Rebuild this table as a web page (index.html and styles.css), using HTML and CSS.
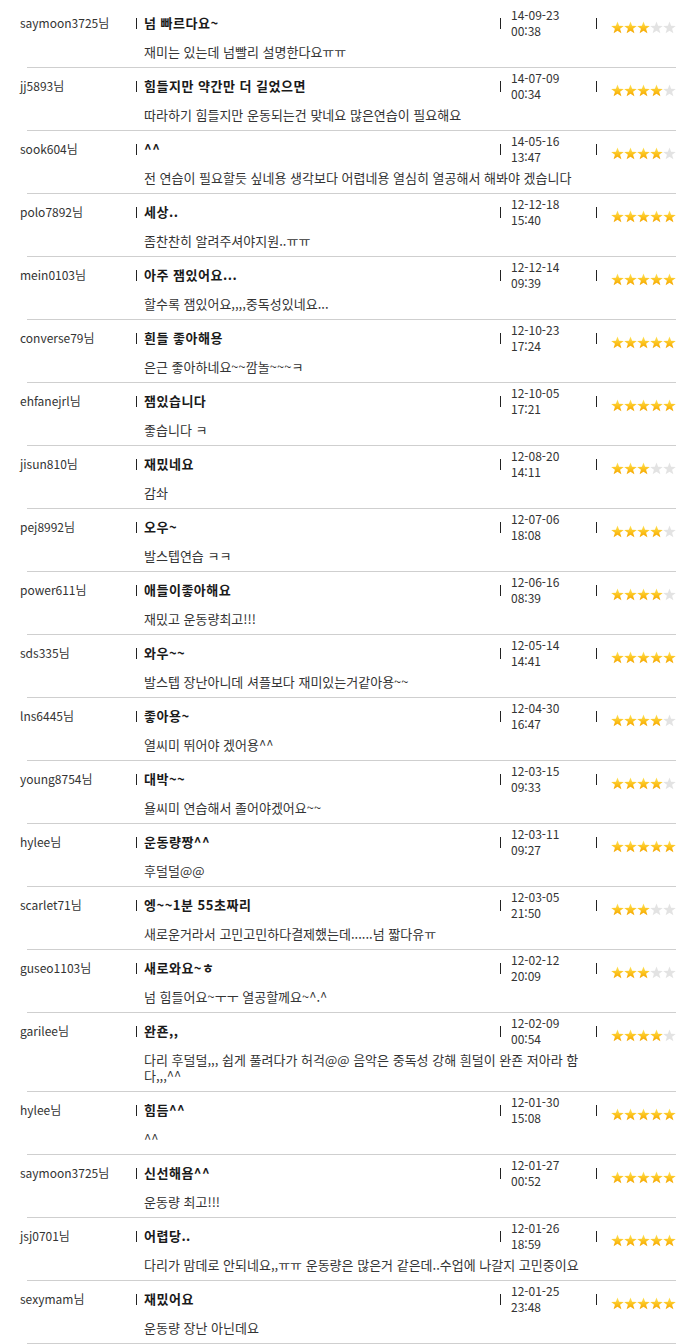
FILE: index.html
```html
<!DOCTYPE html>
<html lang="ko">
<head>
<meta charset="utf-8">
<title>상품평</title>
<link rel="stylesheet" href="styles.css">
</head>
<body>
<svg class="defs" width="0" height="0" aria-hidden="true">
  <defs>
    <linearGradient id="gold" x1="0" y1="0" x2="0" y2="1">
      <stop offset="0" stop-color="#ffe45a"/>
      <stop offset="0.55" stop-color="#fcc21c"/>
      <stop offset="1" stop-color="#f3a300"/>
    </linearGradient>
    <symbol id="star" viewBox="0 0 13 13">
      <polygon points="6.5,0.4 8.09,4.82 12.78,4.96 9.07,7.83 10.38,12.34 6.5,9.7 2.62,12.34 3.93,7.83 0.22,4.96 4.91,4.82"/>
    </symbol>
  </defs>
</svg>
<div class="reviews" id="reviews"></div>
<script src="app.js"></script>
</body>
</html>
```

FILE: app.js
```js
const data = [
  ["saymoon3725님","넘 빠르다요~","14-09-23","00:38",3,"재미는 있는데 넘빨리 설명한다요ㅠㅠ"],
  ["jj5893님","힘들지만 약간만 더 길었으면","14-07-09","00:34",4,"따라하기 힘들지만 운동되는건 맞네요 많은연습이 필요해요"],
  ["sook604님","^^","14-05-16","13:47",4,"전 연습이 필요할듯 싶네용 생각보다 어렵네용 열심히 열공해서 해봐야 겠습니다"],
  ["polo7892님","세상..","12-12-18","15:40",5,"좀찬찬히 알려주셔야지원..ㅠㅠ"],
  ["mein0103님","아주 잼있어요...","12-12-14","09:39",5,"할수록 잼있어요,,,,중독성있네요..."],
  ["converse79님","흰들 좋아해용","12-10-23","17:24",5,"은근 좋아하네요~~깜놀~~~ㅋ"],
  ["ehfanejrl님","잼있습니다","12-10-05","17:21",5,"좋습니다 ㅋ"],
  ["jisun810님","재밌네요","12-08-20","14:11",3,"감솨"],
  ["pej8992님","오우~","12-07-06","18:08",4,"발스텝연습 ㅋㅋ"],
  ["power611님","애들이좋아해요","12-06-16","08:39",4,"재밌고 운동량최고!!!"],
  ["sds335님","와우~~","12-05-14","14:41",5,"발스텝 장난아니데 셔플보다 재미있는거같아용~~"],
  ["lns6445님","좋아용~","12-04-30","16:47",4,"열씨미 뛰어야 겠어용^^"],
  ["young8754님","대박~~","12-03-15","09:33",4,"욜씨미 연습해서 졸어야겠어요~~"],
  ["hylee님","운동량짱^^","12-03-11","09:27",5,"후덜덜@@"],
  ["scarlet71님","엥~~1분 55초짜리","12-03-05","21:50",3,"새로운거라서 고민고민하다결제했는데......넘 짧다유ㅠ"],
  ["guseo1103님","새로와요~ㅎ","12-02-12","20:09",3,"넘 힘들어요~ㅜㅜ 열공할께요~^.^"],
  ["garilee님","완죤,,","12-02-09","00:54",4,"다리 후덜덜,,, 쉽게 풀려다가 허걱@@ 음악은 중독성 강해 흰덜이 완죤 저아라 함다,,,^^"],
  ["hylee님","힘듬^^","12-01-30","15:08",5,"^^"],
  ["saymoon3725님","신선해욤^^","12-01-27","00:52",5,"운동량 최고!!!"],
  ["jsj0701님","어렵당..","12-01-26","18:59",5,"다리가 맘데로 안되네요,,ㅠㅠ 운동량은 많은거 같은데..수업에 나갈지 고민중이요"],
  ["sexymam님","재밌어요","12-01-25","23:48",5,"운동량 장난 아닌데요"]
];

const root = document.getElementById("reviews");
const esc = s => s.replace(/&/g,"&amp;").replace(/</g,"&lt;");
root.innerHTML = data.map(([user, title, d, t, rate, text]) => {
  let stars = "";
  for (let i = 0; i < 5; i++) {
    stars += `<svg class="star ${i < rate ? "on" : "off"}" width="13" height="13"><use href="#star"/></svg>`;
  }
  return `<div class="review">
    <div class="user">${esc(user)}</div>
    <div class="cell title"><span class="bar"></span><span class="title-text">${esc(title)}</span></div>
    <div class="cell date"><span class="bar"></span><span class="date-text">${d}<br>${t}</span></div>
    <div class="cell rating"><span class="bar"></span><span class="stars">${stars}</span></div>
    <div class="comment">${esc(text)}</div>
  </div>`;
}).join("");
```

FILE: styles.css
```css
html, body {
  margin: 0;
  padding: 0;
  background: #fff;
}

body {
  font-family: "Noto Sans CJK KR", "Noto Sans", sans-serif;
  font-size: 12px;
  line-height: 16px;
  color: #333;
}

.defs {
  position: absolute;
  width: 0;
  height: 0;
  overflow: hidden;
}

.reviews {
  padding-top: 5px;
  margin-left: 27px;
  width: 649px;
}

.review {
  display: grid;
  grid-template-columns: 109px 364px 96px 80px;
  grid-template-rows: 32px auto;
  padding: 2px 0 7px;
  border-bottom: 1px solid #cfcfcf;
}

.user {
  margin-left: -7px;
  align-self: center;
  white-space: nowrap;
  color: #333;
}

.cell {
  display: flex;
  align-items: center;
}

.bar {
  flex: none;
  width: 1px;
  height: 11px;
  background: #222;
}

.title-text {
  margin-left: 7px;
  font-size: 13px;
  letter-spacing: 0.5px;
  font-weight: bold;
  color: #1a1a1a;
  white-space: nowrap;
}

.date-text {
  margin-left: 10px;
  color: #333;
}

.stars {
  margin-left: 14px;
  margin-top: 8px;
  display: flex;
}

.star {
  display: block;
  flex: none;
}

.star.on {
  fill: url(#gold);
}

.star.off {
  fill: #e3e3e3;
}

.comment {
  grid-column: 2 / 4;
  margin-top: 5px;
  padding-left: 8px;
  padding-right: 8px;
  font-size: 13px;
}
```
